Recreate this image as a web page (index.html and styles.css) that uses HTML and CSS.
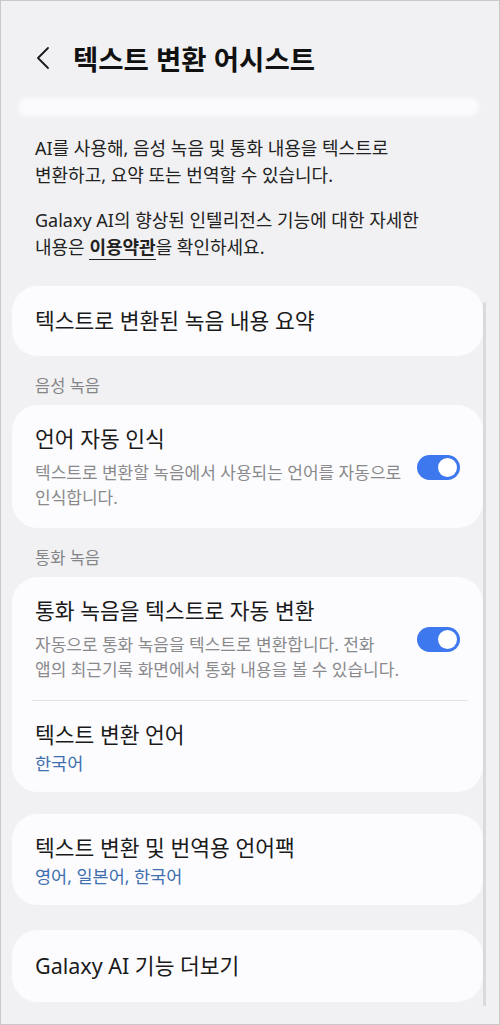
FILE: index.html
```html
<!DOCTYPE html>
<html lang="ko">
<head>
    <meta charset="UTF-8">
    <meta name="viewport" content="width=device-width, initial-scale=1.0">
    <title>텍스트 변환 어시스트</title>
    <link rel="stylesheet" href="styles.css">
</head>
<body>

<div class="screen">
    <!-- Заголовок -->
    <div class="topbar">
        <svg class="back" width="14" height="24" viewBox="0 0 14 24">
            <path d="M12 2 L2 12 L12 22" fill="none" stroke="#1a1a1a" stroke-width="1.8" stroke-linecap="round" stroke-linejoin="round"/>
        </svg>
        <h1>텍스트 변환 어시스트</h1>
    </div>

    <div class="fade-pill"></div>

    <div class="intro">
        <p>AI를 사용해, 음성 녹음 및 통화 내용을 텍스트로 변환하고, 요약 또는 번역할 수 있습니다.</p>
        <p>Galaxy AI의 향상된 인텔리전스 기능에 대한 자세한 내용은 <span class="terms">이용약관</span>을 확인하세요.</p>
    </div>

    <div class="card card-single">
        <div class="item-title">텍스트로 변환된 녹음 내용 요약</div>
    </div>

    <div class="section-label">음성 녹음</div>
    <div class="card">
        <div class="row">
            <div class="row-text">
                <div class="item-title">언어 자동 인식</div>
                <div class="item-desc">텍스트로 변환할 녹음에서 사용되는 언어를 자동으로 인식합니다.</div>
            </div>
            <div class="toggle"><span></span></div>
        </div>
    </div>

    <div class="section-label">통화 녹음</div>
    <div class="card">
        <div class="row">
            <div class="row-text">
                <div class="item-title">통화 녹음을 텍스트로 자동 변환</div>
                <div class="item-desc">자동으로 통화 녹음을 텍스트로 변환합니다. 전화 앱의 최근기록 화면에서 통화 내용을 볼 수 있습니다.</div>
            </div>
            <div class="toggle"><span></span></div>
        </div>
        <div class="divider"></div>
        <div class="row row-value">
            <div class="row-text">
                <div class="item-title">텍스트 변환 언어</div>
                <div class="item-value">한국어</div>
            </div>
        </div>
    </div>

    <div class="card card-pack">
        <div class="row row-value">
            <div class="row-text">
                <div class="item-title">텍스트 변환 및 번역용 언어팩</div>
                <div class="item-value">영어, 일본어, 한국어</div>
            </div>
        </div>
    </div>

    <div class="card card-single card-last">
        <div class="item-title">Galaxy AI 기능 더보기</div>
    </div>

    <!-- Смуга прокрутки -->
    <div class="scrollbar"></div>
</div>

</body>
</html>
```

FILE: styles.css
```css
* {
    margin: 0;
    padding: 0;
    box-sizing: border-box;
}

body {
    background-color: #f1f1f3;
    font-family: "Noto Sans", "Noto Sans CJK KR", sans-serif;
    color: #1c1c1c;
    word-break: keep-all;
}

.screen {
    position: relative;
    width: 500px;
    height: 1025px;
    border: 1px solid #c9c9cb;
    overflow: hidden;
}

/* Заголовок */
.topbar {
    display: flex;
    align-items: center;
    height: 40px;
    margin-top: 37px;
    padding-left: 35px;
}

.back {
    display: block;
}

.topbar h1 {
    margin-left: 23px;
    font-size: 27.5px;
    font-weight: 700;
    color: #111;
}

/* Розмита картка над текстом */
.fade-pill {
    height: 18px;
    margin: 20px 20px 0 17px;
    background: #fbfbfd;
    border-radius: 10px;
    filter: blur(2px);
}

/* Вступний текст */
.intro {
    padding: 19px 40px 0 34px;
}

.intro p {
    font-size: 18px;
    line-height: 27px;
    color: #222;
}

.intro p + p {
    margin-top: 18px;
}

.terms {
    font-weight: 700;
    border-bottom: 1.5px solid #222;
}

/* Картки */
.card {
    background: #fcfcfe;
    border-radius: 26px;
    margin: 0 16px 0 11px;
}

.card-single {
    margin-top: 25px;
    padding: 21px 23px;
}

.card-pack {
    margin-top: 22px;
}

.card-last {
    padding: 22px 23px;
}

.section-label {
    padding: 20px 34px 9px;
    font-size: 16.5px;
    line-height: 20px;
    color: #858587;
}

.row {
    display: flex;
    align-items: center;
    padding: 20px 23px 18px 23px;
}

.row-text {
    width: 370px;
    margin-right: auto;
}

.item-title {
    font-size: 21.5px;
    line-height: 28px;
    color: #1a1a1a;
}

.item-desc {
    margin-top: 8px;
    font-size: 17px;
    line-height: 24.5px;
    color: #8a8a8c;
}

.item-value {
    margin-top: 3px;
    font-size: 17.5px;
    line-height: 22px;
    color: #3f6fae;
}

.row-value {
    padding-top: 20px;
    padding-bottom: 18px;
}

.divider {
    height: 1px;
    background: #e2e2e4;
    margin: 0 15px 0 20px;
}

/* Перемикач */
.toggle {
    width: 43px;
    height: 25px;
    border-radius: 13px;
    background: #3e78ee;
    padding: 3px;
    display: flex;
    justify-content: flex-end;
    flex-shrink: 0;
}

.toggle span {
    width: 19px;
    height: 19px;
    border-radius: 50%;
    background: #fff;
}

.scrollbar {
    position: absolute;
    left: 482px;
    top: 301px;
    width: 3px;
    height: 704px;
    border-radius: 2px;
    background: #dadadc;
}
```
